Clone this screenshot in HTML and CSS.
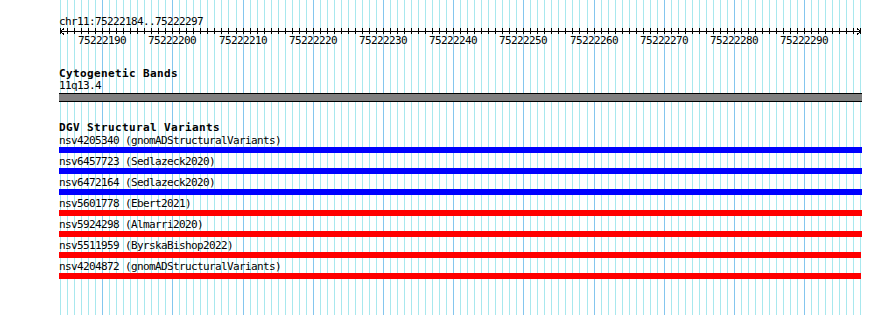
FILE: index.html
```html
<!DOCTYPE html>
<html lang="en">
<head>
  <meta charset="UTF-8">
  <title>chr11:75222184..75222297</title>
  <link rel="stylesheet" href="styles.css">
</head>
<body>

  <div class="browser">
    <svg class="grid" id="grid" width="890" height="315"></svg>

    <div class="ruler">
      <div class="ruler-label">chr11:75222184..75222297</div>
      <svg class="axis" id="axis" width="890" height="20"></svg>
    </div>

    <div class="track cyto">
      <div class="track-title">Cytogenetic Bands</div>
      <div class="band-label">11q13.4</div>
      <div class="band"></div>
    </div>

    <div class="track dgv">
      <div class="track-title">DGV Structural Variants</div>
      <div class="feature">
        <div class="feature-label">nsv4205340 (gnomADStructuralVariants)</div>
        <div class="bar gain"></div>
      </div>
      <div class="feature">
        <div class="feature-label">nsv6457723 (Sedlazeck2020)</div>
        <div class="bar gain"></div>
      </div>
      <div class="feature">
        <div class="feature-label">nsv6472164 (Sedlazeck2020)</div>
        <div class="bar gain"></div>
      </div>
      <div class="feature">
        <div class="feature-label">nsv5601778 (Ebert2021)</div>
        <div class="bar loss"></div>
      </div>
      <div class="feature">
        <div class="feature-label">nsv5924298 (Almarri2020)</div>
        <div class="bar loss"></div>
      </div>
      <div class="feature">
        <div class="feature-label">nsv5511959 (ByrskaBishop2022)</div>
        <div class="bar loss" style="width:802px"></div>
      </div>
      <div class="feature">
        <div class="feature-label">nsv4204872 (gnomADStructuralVariants)</div>
        <div class="bar loss" style="width:802px"></div>
      </div>
    </div>
  </div>

  <script src="script.js"></script>

</body>
</html>
```

FILE: styles.css
```css
body {
  margin: 0;
  background: #fff;
  color: #000;
  font-family: "DejaVu Sans Mono", monospace;
  font-size: 11px;
  letter-spacing: -0.62px;
}
.browser {
  position: relative;
  width: 890px;
  height: 315px;
  overflow: hidden;
}
.grid {
  position: absolute;
  left: 0;
  top: 0;
}
.vline {
  stroke: #a8e8ee;
  stroke-width: 1;
  shape-rendering: crispEdges;
}
.vline.major {
  stroke: #84c6ee;
}
.ruler, .track {
  position: relative;
}
.ruler {
  padding-top: 15px;
}
.ruler-label {
  height: 13px;
  line-height: 13px;
  padding-left: 59px;
}
.axis {
  display: block;
  overflow: visible;
}
.axis-line, .tick, .arrow {
  stroke: #000;
  stroke-width: 1;
  fill: none;
  shape-rendering: crispEdges;
}
.tick-label {
  font-family: "DejaVu Sans Mono", monospace;
  font-size: 11px;
  fill: #000;
}
.track {
  margin-top: 20px;
}
.track-title {
  height: 12px;
  line-height: 12px;
  padding-left: 59px;
  font-weight: bold;
  letter-spacing: 0.38px;
}
.band-label {
  height: 12px;
  line-height: 12px;
  padding-left: 59px;
}
.band {
  margin: 1px 0 0 59px;
  width: 803px;
  height: 7px;
  background: #808080;
  border-top: 1px solid #000;
  border-bottom: 1px solid #000;
}
.feature-label {
  height: 13px;
  line-height: 14px;
  padding-left: 59px;
  white-space: nowrap;
}
.bar {
  margin: 0 0 2px 59px;
  width: 803px;
  height: 6px;
}
.gain {
  background: #0000ff;
}
.loss {
  background: #ff0000;
}
```

FILE: script.js
```js
const SVG_NS = "http://www.w3.org/2000/svg";
const start = 75222184;
const end = 75222297;
const left = 60;
const pxPerBase = 7.02;

function svgEl(name, attrs) {
  const node = document.createElementNS(SVG_NS, name);
  for (const key in attrs) node.setAttribute(key, attrs[key]);
  return node;
}

const grid = document.getElementById("grid");
const axis = document.getElementById("axis");

axis.appendChild(svgEl("line", { x1: left, y1: 3.5, x2: 861, y2: 3.5, "class": "axis-line" }));
axis.appendChild(svgEl("polyline", { points: "64,0.5 60.5,3.5 64,6.5", "class": "arrow" }));
axis.appendChild(svgEl("polyline", { points: "857,0.5 860.5,3.5 857,6.5", "class": "arrow" }));

for (let i = 0; i <= end - start + 1; i++) {
  const pos = start + i;
  const x = Math.round(left + i * pxPerBase) + 0.5;
  const major = pos % 10 === 0;

  grid.appendChild(svgEl("line", { x1: x, y1: 0, x2: x, y2: 315, "class": major ? "vline major" : "vline" }));
  axis.appendChild(svgEl("line", { x1: x, y1: 0, x2: x, y2: 6, "class": "tick" }));

  if (major && pos <= end) {
    const label = svgEl("text", { x: x - 24.5, y: 16, "class": "tick-label" });
    label.textContent = pos;
    axis.appendChild(label);
  }
}
```
